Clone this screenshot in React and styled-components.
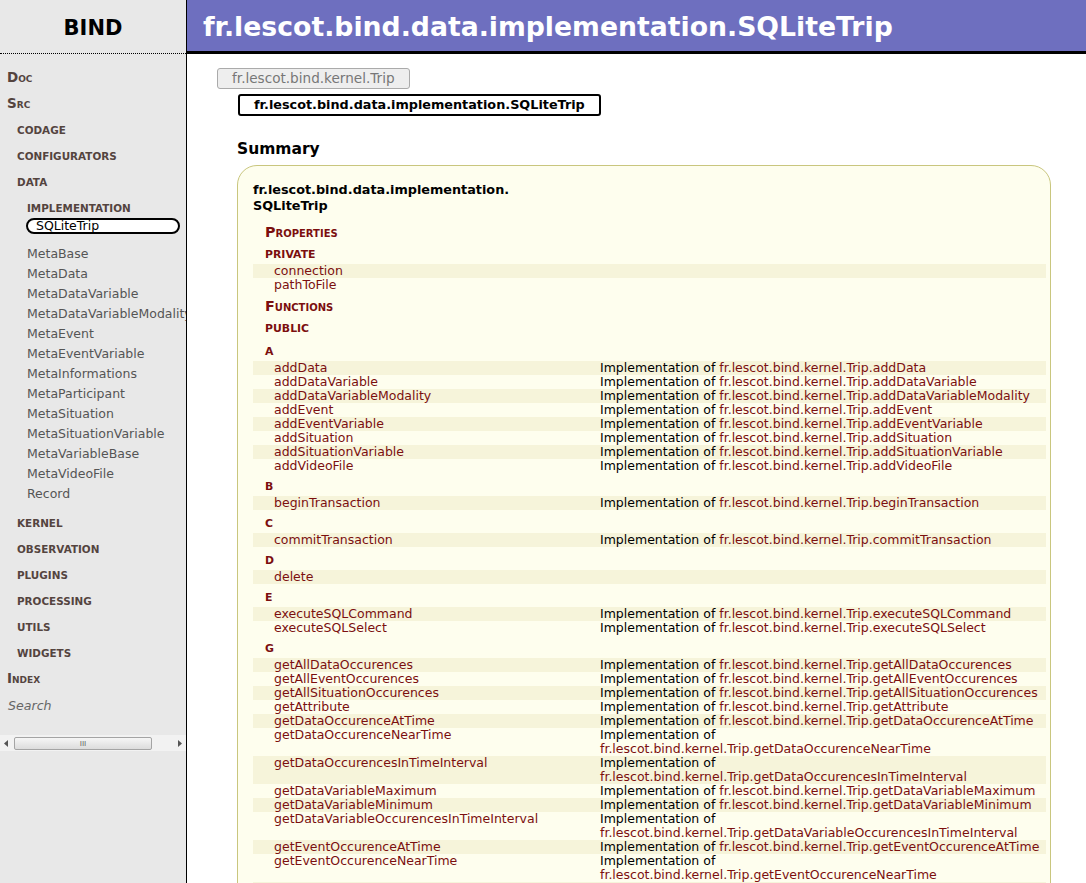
import React from "react";
import styled, { createGlobalStyle } from "styled-components";

const GlobalStyle = createGlobalStyle`
  html, body {
    margin: 0;
    padding: 0;
    height: 100%;
    overflow: hidden;
    background: #fff;
  }
  body {
    font-family: "DejaVu Sans", Verdana, sans-serif;
    font-size: 12.5px;
    color: #000;
  }
`;

const Page = styled.div`
  display: grid;
  grid-template-columns: 187px 1fr;
  height: 883px;
  overflow: hidden;
`;

const Sidebar = styled.nav`
  background: #e8e8e8;
  border-right: 1px solid #000;
  overflow: hidden;
`;

const Brand = styled.div`
  height: 54px;
  border-bottom: 1px dotted #000;
  display: flex;
  align-items: center;
  justify-content: center;
  font-size: 21px;
  font-weight: bold;
  box-sizing: border-box;
  padding-top: 3px;
`;

const NavList = styled.div`
  padding-top: 10px;
  display: flex;
  flex-direction: column;
`;

const TopLink = styled.div`
  padding-left: 7px;
  line-height: 26px;
  font-size: 13.5px;
  font-weight: bold;
  font-variant: small-caps;
  color: #54443f;
  margin-top: ${(p) => p.$mt || 0}px;
`;

const SearchLink = styled.div`
  padding-left: 8px;
  line-height: 26px;
  font-size: 12.6px;
  font-style: italic;
  color: #666;
  margin-top: 2px;
`;

const PackageLink = styled.div`
  padding-left: ${(p) => (p.$depth === 2 ? 27 : 17)}px;
  line-height: 26px;
  font-size: 10.4px;
  font-weight: bold;
  text-transform: uppercase;
  color: #54443f;
  margin-top: ${(p) => p.$mt || 0}px;
`;

const ClassList = styled.div`
  margin-top: -3px;
  display: flex;
  flex-direction: column;
`;

const CurrentClass = styled.div`
  margin-left: 26px;
  width: 154px;
  height: 16px;
  box-sizing: border-box;
  border: 2px solid #000;
  border-radius: 8px;
  background: #fff;
  padding-left: 8px;
  line-height: 12px;
  color: #000;
  margin-bottom: 10px;
`;

const ClassLink = styled.div`
  padding-left: 27px;
  line-height: 20px;
  color: #555;
  white-space: nowrap;
`;

const ScrollBar = styled.div`
  margin-top: 16px;
  height: 16px;
  background: #f2f2f2;
  display: flex;
  align-items: center;
  padding: 0 4px;
  gap: 6px;
`;

const ScrollThumb = styled.div`
  width: 138px;
  height: 13px;
  box-sizing: border-box;
  border: 1px solid #a4a4a4;
  border-radius: 2px;
  background: linear-gradient(#f6f6f6, #dcdcdc);
  display: flex;
  align-items: center;
  justify-content: center;
  font-size: 8px;
  font-family: "Liberation Sans", sans-serif;
  color: #666;
`;

const ScrollSpacer = styled.div`
  flex: 1;
`;

const Main = styled.main`
  overflow: hidden;
`;

const Header = styled.header`
  height: 54px;
  box-sizing: border-box;
  background: #6e6fbf;
  border-bottom: 3px solid #000;
  display: flex;
  align-items: center;
  padding: 2px 0 0 16px;
  color: #fff;
  font-size: 26.7px;
  font-weight: bold;
  white-space: nowrap;
`;

const Content = styled.div`
  padding: 14px 35px 0 50px;
`;

const Hierarchy = styled.div`
  margin-left: -20px;
  display: flex;
  flex-direction: column;
  align-items: flex-start;
`;

const Ancestor = styled.div`
  height: 21px;
  box-sizing: border-box;
  border: 1px solid #aaa;
  border-radius: 3px;
  background: #eee;
  color: #777;
  padding: 0 14px;
  line-height: 19px;
  font-size: 13.6px;
`;

const Self = styled.div`
  margin-left: 21px;
  margin-top: 5px;
  height: 22px;
  box-sizing: border-box;
  border: 2px solid #000;
  border-radius: 3px;
  background: #fff;
  padding: 0 14px;
  line-height: 18px;
  font-size: 12.8px;
  font-weight: bold;
`;

const SectionTitle = styled.h2`
  margin: 23px 0 6px;
  font-size: 15.5px;
  line-height: 20px;
  font-weight: bold;
`;

const SummaryBox = styled.div`
  background: #fefeee;
  border: 1px solid #c9c67e;
  border-radius: 20px 20px 0 0;
  padding: 16px 4px 0 15px;
  min-height: 800px;
`;

const BoxTitle = styled.div`
  font-size: 12.8px;
  font-weight: bold;
  line-height: 16px;
`;

const KindHeading = styled.div`
  margin: ${(p) => p.$mt}px 0 0 12px;
  line-height: 16px;
  font-size: 14.3px;
  font-weight: bold;
  font-variant: small-caps;
  color: #7b0f0f;
`;

const SmallHeading = styled.div`
  margin: ${(p) => p.$mt ?? 7}px 0 0 12px;
  line-height: 16px;
  font-size: 10.9px;
  font-weight: bold;
  text-transform: uppercase;
  color: #7b0f0f;
`;

const Group = styled.div`
  margin-top: 1px;
  display: flex;
  flex-direction: column;
`;

const Row = styled.div`
  display: grid;
  grid-template-columns: 347px 1fr;
  line-height: 14px;
  &:nth-child(odd) {
    background: #f6f4da;
  }
`;

const Name = styled.span`
  padding-left: 21px;
  color: #7b0f0f;
`;

const Desc = styled.span``;

const Link = styled.span`
  color: #7b0f0f;
  white-space: nowrap;
`;

const navPackages = ["CODAGE", "CONFIGURATORS"];
const classes = [
  "MetaBase",
  "MetaData",
  "MetaDataVariable",
  "MetaDataVariableModality",
  "MetaEvent",
  "MetaEventVariable",
  "MetaInformations",
  "MetaParticipant",
  "MetaSituation",
  "MetaSituationVariable",
  "MetaVariableBase",
  "MetaVideoFile",
  "Record",
];
const afterPackages = ["KERNEL", "OBSERVATION", "PLUGINS", "PROCESSING", "UTILS", "WIDGETS"];

const impl = true;
const functionGroups = [
  {
    letter: "A",
    items: [
      ["addData", impl],
      ["addDataVariable", impl],
      ["addDataVariableModality", impl],
      ["addEvent", impl],
      ["addEventVariable", impl],
      ["addSituation", impl],
      ["addSituationVariable", impl],
      ["addVideoFile", impl],
    ],
  },
  { letter: "B", items: [["beginTransaction", impl]] },
  { letter: "C", items: [["commitTransaction", impl]] },
  { letter: "D", items: [["delete", false]] },
  {
    letter: "E",
    items: [
      ["executeSQLCommand", impl],
      ["executeSQLSelect", impl],
    ],
  },
  {
    letter: "G",
    items: [
      ["getAllDataOccurences", impl],
      ["getAllEventOccurences", impl],
      ["getAllSituationOccurences", impl],
      ["getAttribute", impl],
      ["getDataOccurenceAtTime", impl],
      ["getDataOccurenceNearTime", impl],
      ["getDataOccurencesInTimeInterval", impl],
      ["getDataVariableMaximum", impl],
      ["getDataVariableMinimum", impl],
      ["getDataVariableOccurencesInTimeInterval", impl],
      ["getEventOccurenceAtTime", impl],
      ["getEventOccurenceNearTime", impl],
      ["getEventOccurencesInTimeInterval", impl],
      ["getSituationOccurenceAtTime", impl],
    ],
  },
];

function ArrowLeft() {
  return (
    <svg width="4" height="7" viewBox="0 0 4 7">
      <path d="M4 0 L0 3.5 L4 7 Z" fill="#555" />
    </svg>
  );
}

function ArrowRight() {
  return (
    <svg width="4" height="7" viewBox="0 0 4 7">
      <path d="M0 0 L4 3.5 L0 7 Z" fill="#555" />
    </svg>
  );
}

function FunctionRow({ name, implemented }) {
  return (
    <Row>
      <Name>{name}</Name>
      <Desc>
        {implemented && (
          <>
            Implementation of <Link>fr.lescot.bind.kernel.Trip.{name}</Link>
          </>
        )}
      </Desc>
    </Row>
  );
}

export default function App() {
  return (
    <>
      <GlobalStyle />
      <Page>
        <Sidebar>
          <Brand>BIND</Brand>
          <NavList>
            <TopLink>Doc</TopLink>
            <TopLink>Src</TopLink>
            {navPackages.map((p) => (
              <PackageLink key={p} $mt={p === "CODAGE" ? 1 : 0}>
                {p}
              </PackageLink>
            ))}
            <PackageLink>DATA</PackageLink>
            <PackageLink $depth={2}>IMPLEMENTATION</PackageLink>
            <ClassList>
              <CurrentClass>SQLiteTrip</CurrentClass>
              {classes.map((c) => (
                <ClassLink key={c}>{c}</ClassLink>
              ))}
            </ClassList>
            {afterPackages.map((p, i) => (
              <PackageLink key={p} $mt={i === 0 ? 6 : 0}>
                {p}
              </PackageLink>
            ))}
            <TopLink $mt={-1}>Index</TopLink>
            <SearchLink>Search</SearchLink>
          </NavList>
          <ScrollBar>
            <ArrowLeft />
            <ScrollThumb>III</ScrollThumb>
            <ScrollSpacer />
            <ArrowRight />
          </ScrollBar>
        </Sidebar>

        <Main>
          <Header>fr.lescot.bind.data.implementation.SQLiteTrip</Header>
          <Content>
            <Hierarchy>
              <Ancestor>fr.lescot.bind.kernel.Trip</Ancestor>
              <Self>fr.lescot.bind.data.implementation.SQLiteTrip</Self>
            </Hierarchy>
            <SectionTitle>Summary</SectionTitle>
            <SummaryBox>
              <BoxTitle>
                fr.lescot.bind.data.implementation.
                <br />
                SQLiteTrip
              </BoxTitle>
              <KindHeading $mt={10}>Properties</KindHeading>
              <SmallHeading>private</SmallHeading>
              <Group>
                <Row>
                  <Name>connection</Name>
                  <Desc />
                </Row>
                <Row>
                  <Name>pathToFile</Name>
                  <Desc />
                </Row>
              </Group>
              <KindHeading $mt={6}>Functions</KindHeading>
              <SmallHeading>public</SmallHeading>
              {functionGroups.map((g, i) => (
                <React.Fragment key={g.letter}>
                  <SmallHeading $mt={i === 0 ? 7 : 6}>{g.letter}</SmallHeading>
                  <Group>
                    {g.items.map(([name, implemented]) => (
                      <FunctionRow key={name} name={name} implemented={implemented} />
                    ))}
                  </Group>
                </React.Fragment>
              ))}
            </SummaryBox>
          </Content>
        </Main>
      </Page>
    </>
  );
}
